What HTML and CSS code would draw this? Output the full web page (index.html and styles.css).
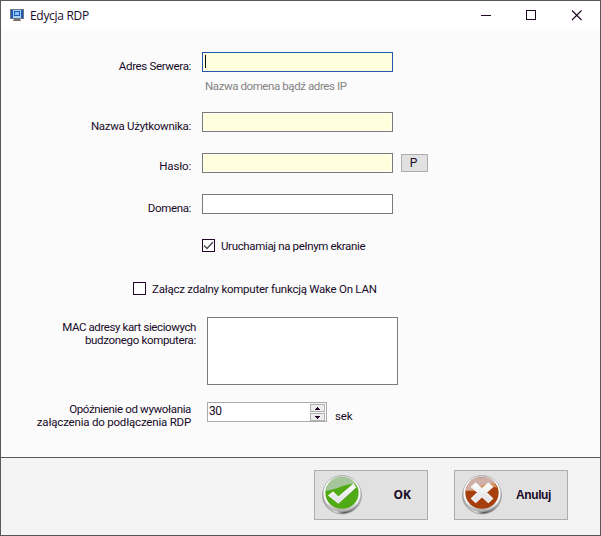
FILE: index.html
```
<!DOCTYPE html>
<html lang="pl">
<head>
<meta charset="utf-8">
<title>Edycja RDP</title>
<link rel="stylesheet" href="styles.css">
</head>
<body>
<div class="window">
  <header class="titlebar">
    <svg class="app-icon" width="14" height="12" viewBox="0 0 14 12">
      <rect x="0.5" y="0.5" width="13" height="9" fill="#2456ad" stroke="#6f7684"/>
      <rect x="3" y="1" width="8" height="8" fill="#a5d4f7"/>
      <rect x="4.500" y="2.500" width="5" height="4" fill="#8cc4f4" stroke="#1c55bd"/>
      <path d="M4 10h6l1 2H3z" fill="#77706b"/>
    </svg>
    <span class="title">Edycja RDP</span>
    <svg class="controls" width="103" height="12" viewBox="0 0 103 12" fill="none" stroke="#1c0620">
      <path d="M1 5.5h10M46.500 .5h9v9h-9z" shape-rendering="crispEdges"/>
      <path d="M92 .5l9.500 9.500M101.500 .5L92 10" stroke-width="1.100"/>
    </svg>
  </header>
  <main class="form">
    <div class="row server">
      <label class="label l-server">Adres Serwera:</label>
      <div class="field required focused"><span class="caret"></span></div>
    </div>
    <p class="hint">Nazwa domena bądź adres IP</p>
    <div class="row user">
      <label class="label l-user">Nazwa Użytkownika:</label>
      <div class="field required"></div>
    </div>
    <div class="row password">
      <label class="label l-pass">Hasło:</label>
      <div class="field required"></div>
      <button class="peek">P</button>
    </div>
    <div class="row domain">
      <label class="label l-domain">Domena:</label>
      <div class="field"></div>
    </div>
    <div class="check fullscreen">
      <span class="box"><svg width="11" height="11" viewBox="0 0 11 11"><path d="M1 5.500l3 3L10 2" fill="none" stroke="#4a4550" stroke-width="1.300"/></svg></span>
      <span class="c-full">Uruchamiaj na pełnym ekranie</span>
    </div>
    <div class="check wake">
      <span class="box"></span>
      <span class="c-wake">Załącz zdalny komputer funkcją Wake On LAN</span>
    </div>
    <div class="row mac">
      <label class="label wide"><span class="m-one">MAC adresy kart sieciowych</span><br><span class="m-two">budzonego komputera:</span></label>
      <div class="area"></div>
    </div>
    <div class="row delay">
      <label class="label narrow"><span class="d-one">Opóźnienie od wywołania</span><br><span class="d-two">załączenia do podłączenia RDP</span></label>
      <div class="spinner">
        <span class="value">30</span>
        <span class="steps">
          <span class="step"><svg width="5" height="3" viewBox="0 0 5 3" shape-rendering="crispEdges"><path d="M2 0h1v1h1v1h1v1H0V2h1V1h1z" fill="#24042b"/></svg></span>
          <span class="step"><svg width="5" height="3" viewBox="0 0 5 3" shape-rendering="crispEdges"><path d="M0 0h5v1H4v1H3v1H2V2H1V1H0z" fill="#24042b"/></svg></span>
        </span>
      </div>
      <span class="unit">sek</span>
    </div>
  </main>
  <footer class="actions">
    <button class="action">
      <svg class="badge" width="40" height="40" viewBox="1 0 38 40" preserveAspectRatio="none">
        <defs>
          <linearGradient id="rim" x1="0" y1="0" x2="0" y2="1"><stop offset="0" stop-color="#c9c9c9"/><stop offset=".2" stop-color="#fff"/><stop offset=".75" stop-color="#f4f4f4"/><stop offset="1" stop-color="#aaa"/></linearGradient>
          <linearGradient id="base" x1="0" y1="0" x2="1" y2="0"><stop offset="0" stop-color="#999"/><stop offset=".35" stop-color="#ddd"/><stop offset=".55" stop-color="#555"/><stop offset="1" stop-color="#bbb"/></linearGradient>
          <linearGradient id="mark" x1="0" y1="0" x2="0" y2="1"><stop offset="0" stop-color="#fff"/><stop offset="1" stop-color="#dedee4"/></linearGradient>
        </defs>
        <circle cx="20" cy="20.500" r="18.500" fill="url(#base)" stroke="#999" stroke-width=".7"/>
        <circle cx="20" cy="18.500" r="18" fill="url(#rim)" stroke="#aaa" stroke-width=".7"/>
        <circle cx="20" cy="18" r="15.800" fill="#50aa13"/>
        <path d="M4.500 16C6 7 12 2.200 20 2.200c6 0 10 2.500 13 7C23 8 16 14.500 4.500 16z" fill="#a6c59c"/>
        <path d="M8 21l3.500-3.500 5 5.500L31.500 10l1.500 4-16.500 15z" fill="#387d16" opacity=".7"/>
        <path d="M7.500 20.500l4-3.500 5 5L31 9l2 3.500L16.500 28z" fill="url(#mark)" stroke="#f4f4f4" stroke-width="1"/>
      </svg>
      <span class="caption ok">OK</span>
    </button>
    <button class="action">
      <svg class="badge" width="40" height="40" viewBox="1 0 38 40" preserveAspectRatio="none">
        <circle cx="20" cy="20.500" r="18.500" fill="url(#base)" stroke="#999" stroke-width=".7"/>
        <circle cx="20" cy="18.500" r="18" fill="url(#rim)" stroke="#aaa" stroke-width=".7"/>
        <circle cx="20" cy="18" r="15.800" fill="#a63e0e"/>
        <path d="M4.500 16C6 7 12 2.200 20 2.200c6 0 10 2.500 13 7C23 8 16 14.500 4.500 16z" fill="#ceb0a8"/>
        <path d="M4.500 16C14 15 18 8 32 8.500l2.500 4C25 10 20 17 4.500 16z" fill="#dc9156"/>
        <path d="M10 12l4-4 6 6 6-6 4 4-6 5.500 6 6-4 4-6-6-6 6-4-4 6-6z" fill="url(#mark)" stroke="#f4f4f4" stroke-width="1.200"/>
      </svg>
      <span class="caption cancel">Anuluj</span>
    </button>
  </footer>
</div>
</body>
</html>
```
FILE: styles.css
```
* { box-sizing: border-box; }
body {
  margin: 0;
  font: 11.5px/13px Roboto, "Liberation Sans", sans-serif;
  letter-spacing: -0.35px;
  color: #180a28;
}
.window {
  width: 601px;
  height: 536px;
  border: 1px solid #58585a;
  background: #fbfbfb;
  display: flex;
  flex-direction: column;
  white-space: nowrap;
}
.titlebar {
  height: 30px;
  background: #fff;
  display: flex;
  align-items: flex-start;
  padding: 8px 17px 0 9px;
}
.app-icon { flex: none; }
.title {
  font: 12px/14px "Open Sans", "Noto Sans", sans-serif;
  margin-left: 6px;
  letter-spacing: -0.3px;
}
.controls { margin: 1px 0 0 auto; }
.form { height: 426px; }
.row { display: flex; }
.label {
  width: 190px;
  text-align: right;
  padding-top: 8px;
  flex: none;
}
.field {
  width: 191px;
  height: 20px;
  margin-left: 11px;
  border: 1px solid #7a7a7a;
  background: #fff;
}
.required { background: #ffffde; box-shadow: inset 0 0 0 1px #fffff2; }
.focused { border-color: #2456ad; box-shadow: none; }
.caret { display: block; width: 1px; height: 13px; margin: 2px 0 0 2px; background: #000; }
.server { height: 20px; margin-top: 21px; }
.hint { margin: 8px 0 0 204px; height: 13px; color: #838383; letter-spacing: -0.41px; }
.user { height: 20px; margin-top: 19px; }
.l-user { letter-spacing: -0.29px; }
.password { height: 20px; margin-top: 21px; }
.l-pass { padding-top: 7px; letter-spacing: -0.2px; }
.domain { height: 20px; margin-top: 21px; }
.peek {
  width: 27px;
  height: 18px;
  margin: 1px 0 0 8px;
  padding: 0 2px 0 0;
  border: 1px solid #adadad;
  background: #e1e1e1;
  font: inherit;
  font-size: 12px;
  color: inherit;
}
.check { height: 13px; display: flex; gap: 6px; line-height: 15px; }
.box { width: 13px; height: 13px; border: 1px solid #24042b; background: #fff; flex: none; }
.box svg { display: block; }
.fullscreen { margin: 25px 0 0 201px; }
.wake { margin: 30px 0 0 132px; }
.c-wake { letter-spacing: -0.25px; }
.mac { height: 68px; margin-top: 22px; }
.wide { width: 195px; padding-top: 4px; }
.m-one { letter-spacing: -0.4px; }
.m-two { letter-spacing: -0.33px; }
.area { width: 191px; height: 68px; margin-left: 11px; border: 1px solid #7a7a7a; background: #fff; }
.delay { height: 26px; margin-top: 17px; }
.narrow { width: 190px; padding-top: 1px; }
.d-two { letter-spacing: -0.2px; }
.spinner {
  width: 120px;
  height: 20px;
  margin-left: 16px;
  padding: 0 1px;
  border: 1px solid #ababab;
  background: #fff;
  display: flex;
  justify-content: space-between;
}
.value { font-size: 12px; line-height: 17px; letter-spacing: -0.5px; }
.steps { width: 15px; padding-top: 1px; background: #f4f4f4; }
.step {
  height: 8px;
  display: flex;
  align-items: center;
  justify-content: center;
  border: 1px solid #b0b0b0;
  background: #ededed;
}
.step + .step { margin-top: 1px; }
.unit { margin: 8px 0 0 8px; letter-spacing: -0.2px; }
.actions {
  flex: 1;
  border-top: 1px solid #58585a;
  background: #f4f4f4;
  display: flex;
  align-items: flex-start;
  justify-content: flex-end;
  gap: 26px;
  padding: 12px 32px 0 0;
}
.action {
  width: 114px;
  height: 50px;
  padding: 0 16px 0 7px;
  border: 1px solid #adadad;
  background: #e1e1e1;
  color: inherit;
  font: bold 12px/14px "Open Sans", "Noto Sans", sans-serif;
  display: flex;
  align-items: center;
  justify-content: space-between;
}
.badge { flex: none; }
.cancel { font: bold 12px/14px "Liberation Sans", Arial, sans-serif; letter-spacing: -0.4px; }
```
